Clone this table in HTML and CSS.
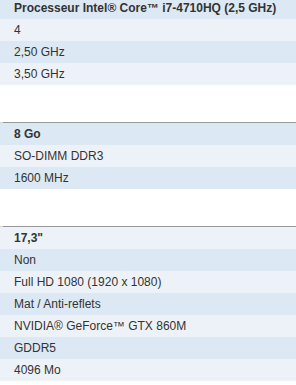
FILE: index.html
```html
<!DOCTYPE html>
<html>
<head>
<meta charset="utf-8">
<link rel="stylesheet" href="styles.css">
</head>
<body>
<div class="specs">
  <section class="group first">
    <div class="rule"></div>
    <div class="row dark bold">Processeur Intel® Core™ i7-4710HQ (2,5 GHz)</div>
    <div class="row light">4</div>
    <div class="row dark">2,50 GHz</div>
    <div class="row light">3,50 GHz</div>
  </section>
  <section class="group">
    <div class="rule"></div>
    <div class="row dark bold">8 Go</div>
    <div class="row light">SO-DIMM DDR3</div>
    <div class="row dark">1600 MHz</div>
  </section>
  <section class="group">
    <div class="rule"></div>
    <div class="row light bold">17,3"</div>
    <div class="row dark">Non</div>
    <div class="row light">Full HD 1080 (1920 x 1080)</div>
    <div class="row dark">Mat / Anti-reflets</div>
    <div class="row light">NVIDIA® GeForce™ GTX 860M</div>
    <div class="row dark">GDDR5</div>
    <div class="row light">4096 Mo</div>
  </section>
</div>
</body>
</html>
```

FILE: styles.css
```css
html, body {
  margin: 0;
  padding: 0;
  background: #ffffff;
}
body {
  font-family: "Liberation Sans", Arial, sans-serif;
  font-size: 12px;
  color: #333333;
  overflow: hidden;
}
.specs {
  display: flex;
  flex-direction: column;
  gap: 37px;
  margin-top: -4px;
}
.group {
  display: flex;
  flex-direction: column;
}
.rule {
  height: 1px;
  background: linear-gradient(to right, #d4d4d4 0, #d4d4d4 3px, #999999 3px);
}
.row {
  height: 22px;
  line-height: 22px;
  padding-left: 14px;
  white-space: nowrap;
}
.bold {
  font-weight: bold;
}
.dark {
  background: #dce8f3;
}
.light {
  background: #edf2f9;
}
```
